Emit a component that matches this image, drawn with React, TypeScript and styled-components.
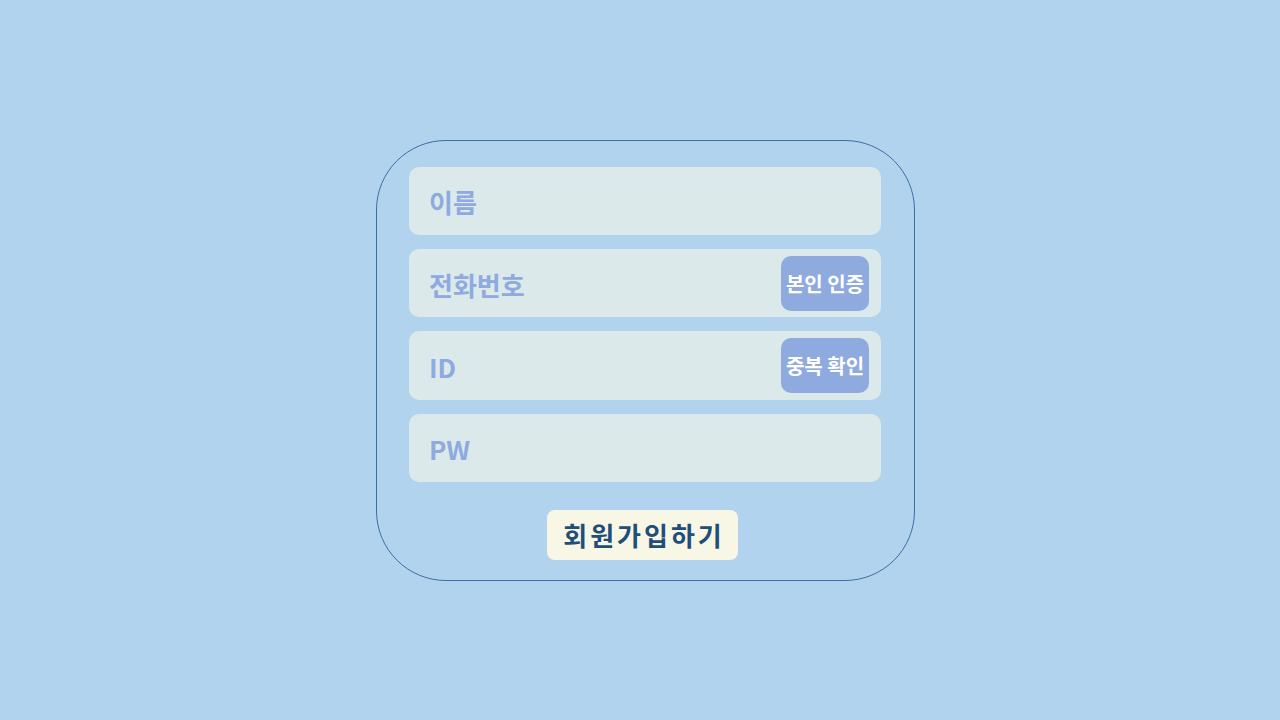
import styled, { createGlobalStyle } from "styled-components";

const GlobalStyle = createGlobalStyle`
  html, body {
    margin: 0;
    padding: 0;
    background-color: #b1d3ed;
    font-family: "Noto Sans CJK KR", "Noto Sans", sans-serif;
  }
`;

type Field = {
  placeholder: string;
  type?: string;
  action?: string;
};

const fields: Field[] = [
  { placeholder: "이름" },
  { placeholder: "전화번호", action: "본인 인증" },
  { placeholder: "ID", action: "중복 확인" },
  { placeholder: "PW", type: "password" },
];

const App = () => {
  return (
    <Page>
      <GlobalStyle />
      <Card>
        {fields.map((field) => (
          <InputRow key={field.placeholder}>
            <Input type={field.type ?? "text"} placeholder={field.placeholder} />
            {field.action && <SideButton type="button">{field.action}</SideButton>}
          </InputRow>
        ))}
        <SubmitButton type="button">회원가입하기</SubmitButton>
      </Card>
    </Page>
  );
};

export default App;

const Page = styled.main`
  width: 100vw;
  height: 100vh;
  display: flex;
  justify-content: center;
  align-items: center;
`;

const Card = styled.form`
  box-sizing: border-box;
  width: 539px;
  height: 441px;
  padding: 26px 32px 20px 32px;
  border: 1px solid #3d6da4;
  border-radius: 70px;
  display: flex;
  flex-direction: column;
  align-items: center;
  gap: 14px;
  margin-left: 10px;
`;

const InputRow = styled.div`
  box-sizing: border-box;
  flex-shrink: 0;
  width: 472px;
  height: 68.4px;
  border-radius: 10px;
  background-color: #dbe9ea;
  display: flex;
  align-items: center;
  padding: 0 12px 0 20px;
`;

const Input = styled.input`
  flex: 1;
  min-width: 0;
  border: none;
  outline: none;
  background: transparent;
  font-family: inherit;
  font-size: 26px;
  font-weight: 700;
  color: #3d6da4;
  padding: 2px 0 0 0;

  &::placeholder {
    color: #8eaadf;
    opacity: 1;
  }
`;

const SideButton = styled.button`
  width: 88px;
  height: 55px;
  border: none;
  border-radius: 10px;
  background-color: #8eaadf;
  color: #ffffff;
  font-family: inherit;
  font-size: 20px;
  font-weight: 700;
  padding: 0;
  cursor: pointer;
`;

const SubmitButton = styled.button`
  margin-top: 14px;
  margin-right: 5px;
  width: 191px;
  height: 50px;
  border: none;
  border-radius: 8px;
  background-color: #f8f7e6;
  color: #1f4e79;
  font-family: inherit;
  font-size: 26px;
  font-weight: 700;
  letter-spacing: 3px;
  padding: 0 0 0 3px;
  cursor: pointer;
`;
